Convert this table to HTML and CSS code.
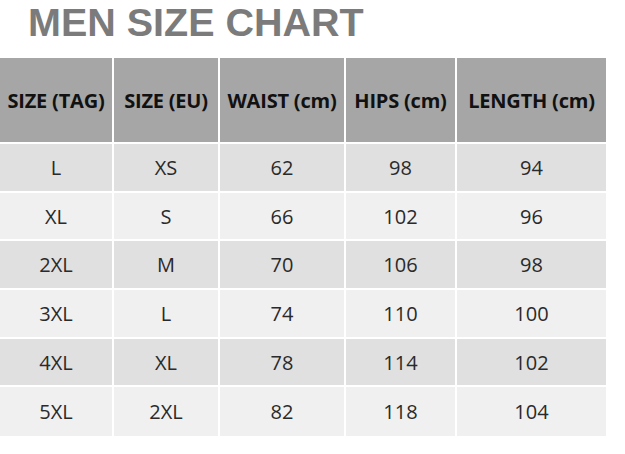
FILE: index.html
```html
<!DOCTYPE html>
<html>
<head>
<meta charset="utf-8">
<link rel="stylesheet" href="styles.css">
</head>
<body>
<h1 class="title">MEN SIZE CHART</h1>
<table class="chart">
  <colgroup>
    <col class="c1"><col class="c2"><col class="c3"><col class="c4"><col class="c5">
  </colgroup>
  <thead>
    <tr><th>SIZE (TAG)</th><th>SIZE (EU)</th><th>WAIST (cm)</th><th>HIPS (cm)</th><th>LENGTH (cm)</th></tr>
  </thead>
  <tbody>
    <tr><td>L</td><td>XS</td><td>62</td><td>98</td><td>94</td></tr>
    <tr><td>XL</td><td>S</td><td>66</td><td>102</td><td>96</td></tr>
    <tr><td>2XL</td><td>M</td><td>70</td><td>106</td><td>98</td></tr>
    <tr><td>3XL</td><td>L</td><td>74</td><td>110</td><td>100</td></tr>
    <tr><td>4XL</td><td>XL</td><td>78</td><td>114</td><td>102</td></tr>
    <tr><td>5XL</td><td>2XL</td><td>82</td><td>118</td><td>104</td></tr>
  </tbody>
</table>
</body>
</html>
```
FILE: styles.css
```css
html, body {
  margin: 0;
  padding: 0;
  background: #ffffff;
}
.title {
  margin: 0 0 14px 0;
  padding-left: 28px;
  font-family: "Liberation Sans", Arial, sans-serif;
  font-weight: bold;
  font-size: 39.5px;
  line-height: 44px;
  color: #7b7b7b;
}
.chart {
  border-collapse: separate;
  border-spacing: 0;
  table-layout: fixed;
  width: 606px;
  font-family: "Open Sans", sans-serif;
}
.c1 { width: 114px; }
.c2 { width: 106px; }
.c3 { width: 126px; }
.c4 { width: 111px; }
.c5 { width: 149px; }
.chart th,
.chart td {
  padding: 0;
  text-align: center;
  border-right: 2px solid #ffffff;
  border-bottom: 2px solid #ffffff;
  box-sizing: border-box;
}
.chart th:last-child,
.chart td:last-child {
  border-right: 0;
}
.chart th {
  background: #a6a6a6;
  color: #111111;
  font-weight: bold;
  font-size: 20px;
  letter-spacing: -0.2px;
  height: 86px;
  white-space: nowrap;
}
.chart td {
  font-size: 20px;
  color: #2a2a2a;
  height: 48.7px;
}
.chart tbody tr:nth-child(odd) td { background: #e0e0e0; }
.chart tbody tr:nth-child(even) td { background: #f0f0f0; }
.chart tbody tr:last-child td { border-bottom: 0; }
```
